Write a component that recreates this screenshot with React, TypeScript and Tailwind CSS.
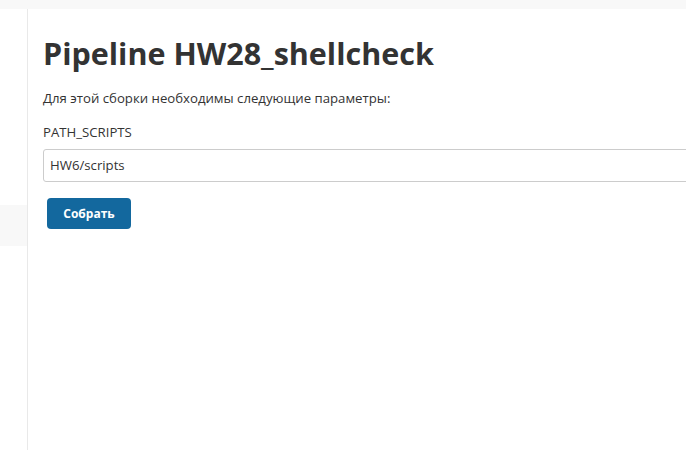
export default function App() {
  return (
    <div className="flex h-[450px] w-[686px] flex-col overflow-hidden bg-white font-['Open_Sans',sans-serif] text-[#333]">
      <div className="h-[9px] shrink-0 bg-[#f8f8f8]" />
      <div className="flex flex-1">
        <aside className="w-[28px] shrink-0 border-r border-[#e9e9e9]">
          <div className="mt-[196px] h-[41px] bg-[#f8f8f8]" />
        </aside>
        <main className="flex-1 pl-[15px] pt-[22px]">
          <h1 className="text-[30.5px] font-bold leading-[44px] text-[#333]">Pipeline HW28_shellcheck</h1>
          <p className="mt-[14px] text-[13.2px] leading-[18px]">Для этой сборки необходимы следующие параметры:</p>
          <div className="mt-[16px] text-[13.2px] leading-[18px]">PATH_SCRIPTS</div>
          <div className="mt-[8px] -mr-[10px] flex h-[33px] items-center rounded-[3px] border border-[#ccc] px-[6px] text-[13.2px]">
            HW6/scripts
          </div>
          <button
            type="button"
            className="ml-[4px] mt-[16px] h-[31px] w-[84px] rounded-[4px] bg-[#13689e] text-[12px] font-bold text-white"
          >
            Собрать
          </button>
        </main>
      </div>
    </div>
  );
}
